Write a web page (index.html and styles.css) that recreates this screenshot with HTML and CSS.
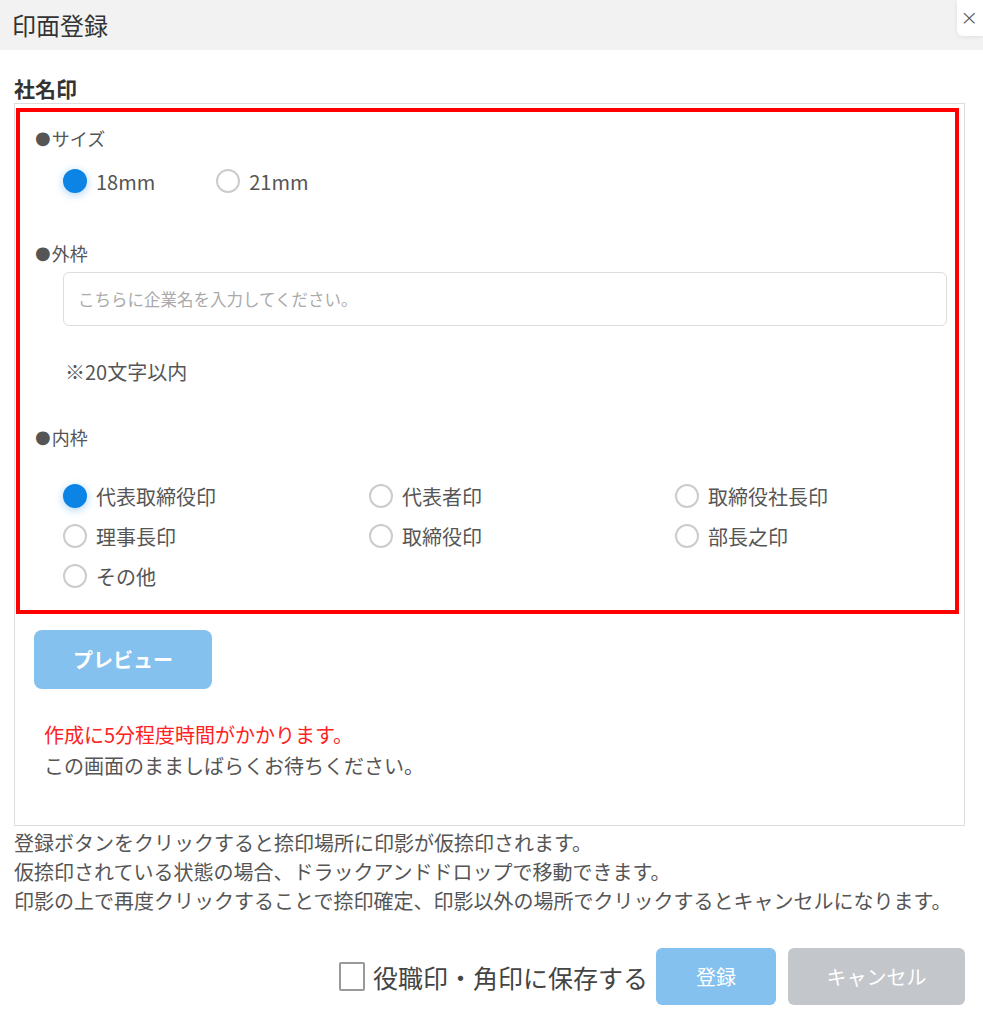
FILE: index.html
```html
<!DOCTYPE html>
<html lang="ja">
<head>
    <meta charset="UTF-8">
    <title>印面登録</title>
    <link rel="stylesheet" href="styles.css">
</head>
<body>
    <div class="header">
        <h1 class="title">印面登録</h1>
        <button type="button" class="close-btn">×</button>
    </div>

    <div class="main">
        <div class="label-title">社名印</div>
        <div class="stamp-box">
            <div class="red-frame">
                <div class="section-title"><span class="bullet">●</span>サイズ</div>
                <div class="option-row">
                    <label class="radio-item"><input type="radio" name="size" value="18" checked><span>18mm</span></label>
                    <label class="radio-item"><input type="radio" name="size" value="21"><span>21mm</span></label>
                </div>

                <div class="section-title gap-outer"><span class="bullet">●</span>外枠</div>
                <input type="text" class="name-input" placeholder="こちらに企業名を入力してください。">
                <div class="hint">※20文字以内</div>

                <div class="section-title gap-inner"><span class="bullet">●</span>内枠</div>
                <div class="inner-grid">
                    <label class="radio-item"><input type="radio" name="inner" checked><span>代表取締役印</span></label>
                    <label class="radio-item"><input type="radio" name="inner"><span>代表者印</span></label>
                    <label class="radio-item"><input type="radio" name="inner"><span>取締役社長印</span></label>
                    <label class="radio-item"><input type="radio" name="inner"><span>理事長印</span></label>
                    <label class="radio-item"><input type="radio" name="inner"><span>取締役印</span></label>
                    <label class="radio-item"><input type="radio" name="inner"><span>部長之印</span></label>
                    <label class="radio-item"><input type="radio" name="inner"><span>その他</span></label>
                </div>
            </div>

            <div class="preview-area">
                <button type="button" class="preview-btn">プレビュー</button>
                <div class="wait-text">
                    <p class="warn">作成に5分程度時間がかかります。</p>
                    <p>この画面のまましばらくお待ちください。</p>
                </div>
            </div>
        </div>

        <div class="notes">
            <p>登録ボタンをクリックすると捺印場所に印影が仮捺印されます。</p>
            <p>仮捺印されている状態の場合、ドラックアンドドロップで移動できます。</p>
            <p>印影の上で再度クリックすることで捺印確定、印影以外の場所でクリックするとキャンセルになります。</p>
        </div>

        <div class="footer">
            <label class="save-check"><input type="checkbox"><span>役職印・角印に保存する</span></label>
            <button type="button" class="btn btn-register">登録</button>
            <button type="button" class="btn btn-cancel">キャンセル</button>
        </div>
    </div>
</body>
</html>
```

FILE: styles.css
```css
body {
    margin: 0;
    font-family: "Noto Sans CJK JP", sans-serif;
    color: #555;
    background: #fff;
    overflow: hidden;
}

p {
    margin: 0;
}

.header {
    position: relative;
    height: 50px;
    background-color: #f2f2f2;
    display: flex;
    align-items: center;
    padding-left: 12px;
}

.title {
    margin: 0;
    font-size: 24px;
    font-weight: normal;
    color: #333;
    line-height: 30px;
}

.close-btn {
    position: absolute;
    top: 0;
    right: 0;
    width: 26px;
    height: 36px;
    padding: 0 0 0 3px;
    border: none;
    border-radius: 0 0 0 6px;
    background: #fff;
    box-shadow: 0 1px 4px rgba(0, 0, 0, 0.08);
    font-family: "DejaVu Sans", sans-serif;
    font-size: 22px;
    font-weight: 300;
    color: #555;
    text-align: left;
    line-height: 26px;
}

.main {
    padding: 26px 18px 0 14px;
}

.label-title {
    font-size: 21px;
    font-weight: bold;
    color: #333;
    line-height: 24px;
    margin-bottom: 3px;
}

.stamp-box {
    border: 1px solid #ddd;
    padding: 4px 5px 0 1px;
}

.red-frame {
    border: 4px solid #f00;
    padding: 13px 8px 14px 15px;
}

.section-title {
    display: flex;
    align-items: center;
    height: 26px;
    font-size: 18px;
    color: #555;
}

.bullet {
    font-family: "DejaVu Sans", sans-serif;
    font-size: 18px;
    line-height: 1;
    margin-right: 1px;
    color: #555;
}

.gap-outer {
    margin-top: 44px;
}

.gap-inner {
    margin-top: 38px;
}

.option-row {
    display: flex;
    align-items: center;
    height: 30px;
    margin: 15px 0 0 28px;
    gap: 61px;
}

.radio-item {
    display: flex;
    align-items: center;
    gap: 9px;
    font-size: 20px;
    color: #555;
}

.radio-item input {
    appearance: none;
    -webkit-appearance: none;
    width: 24px;
    height: 24px;
    margin: 0;
    border: 2px solid #ccc;
    border-radius: 50%;
    background: #fff;
}

.radio-item input:checked {
    background-color: #0b84e5;
    border-color: #0b84e5;
    box-shadow: 0 2px 8px rgba(11, 132, 229, 0.35);
}

.name-input {
    display: block;
    box-sizing: border-box;
    width: calc(100% - 28px);
    height: 54px;
    margin: 6px 0 0 28px;
    padding: 0 14px;
    border: 1px solid #ddd;
    border-radius: 6px;
    font-family: "Noto Sans CJK JP", sans-serif;
    font-size: 16.5px;
    color: #555;
}

.name-input::placeholder {
    color: #aaa;
}

.hint {
    margin: 32px 0 0 30px;
    font-size: 20px;
    line-height: 28px;
}

.inner-grid {
    display: grid;
    grid-template-columns: repeat(3, 306px);
    grid-auto-rows: 40px;
    align-items: center;
    margin: 26px 0 0 28px;
}

.preview-area {
    padding: 16px 0 44px 18px;
}

.preview-btn {
    width: 178px;
    height: 59px;
    border: none;
    border-radius: 8px;
    background-color: #85c1ef;
    color: #fff;
    font-family: "Noto Sans CJK JP", sans-serif;
    font-size: 20px;
    font-weight: bold;
}

.wait-text {
    margin: 30px 0 0 10px;
    font-size: 20px;
    line-height: 31px;
}

.warn {
    color: #f22;
}

.notes {
    margin-top: 2px;
    font-size: 20px;
    line-height: 29px;
}

.footer {
    display: flex;
    align-items: center;
    justify-content: flex-end;
    margin-top: 33px;
    gap: 12px;
}

.save-check {
    display: flex;
    align-items: center;
    gap: 8px;
    margin-right: -4px;
    font-size: 25px;
    color: #444;
}

.save-check input {
    appearance: none;
    -webkit-appearance: none;
    width: 26px;
    height: 29px;
    margin: 0;
    border: 2px solid #999;
    border-radius: 2px;
    background: #fff;
}

.btn {
    height: 57px;
    border: none;
    border-radius: 6px;
    color: #fff;
    font-family: "Noto Sans CJK JP", sans-serif;
    font-size: 20px;
}

.btn-register {
    width: 120px;
    background-color: #85c1ef;
}

.btn-cancel {
    width: 177px;
    background-color: #c3c6ca;
}
```
